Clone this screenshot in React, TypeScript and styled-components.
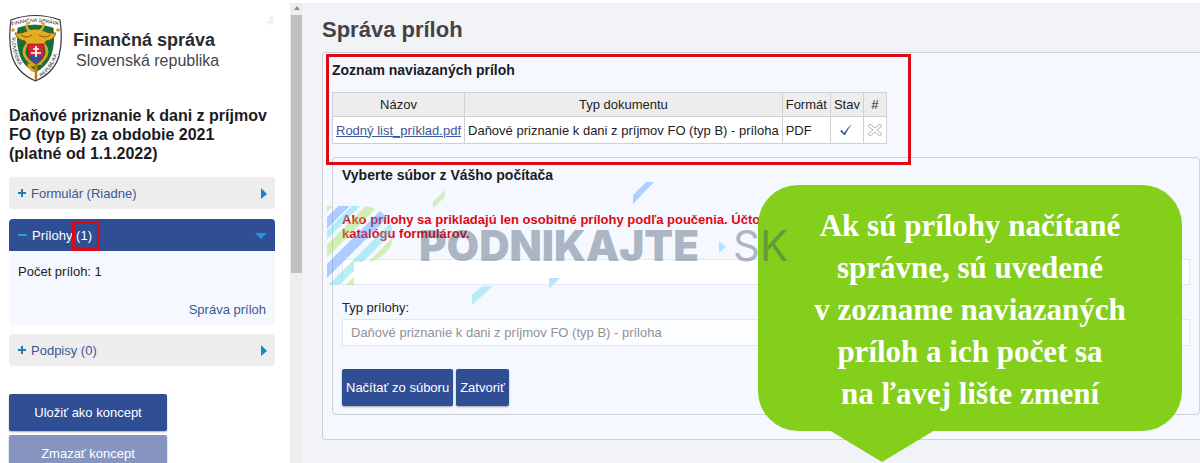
import React from "react";
import styled, { createGlobalStyle } from "styled-components";

const BLUE = "#2f4e94";
const LINK = "#3c5699";
const RED = "#dc0a14";
const LINE = "#cfd0d4";

const GlobalStyle = createGlobalStyle`
  * { box-sizing: border-box; }
  body { margin: 0; background: #fff; }
  body, button, input, select {
    font-family: "Liberation Sans", Arial, sans-serif;
    font-size: 13px;
    color: #222;
  }
  h1, h2, h3, p { margin: 0; }
`;

const Page = styled.div`
  display: flex;
  height: 100vh;
  overflow: hidden;
`;

const Sidebar = styled.aside`
  position: relative;
  flex: 0 0 290px;
  padding: 14px 15px 0 9px;
`;

const StepCount = styled.span`
  position: absolute;
  top: 14px;
  right: 16px;
  font-size: 12px;
  color: #e9e9f1;
`;

const Brand = styled.header`
  display: flex;
  gap: 11px;
  height: 68px;
`;

const BrandName = styled.div`
  padding-top: 16px;
  font-size: 18px;
  line-height: 21px;
  font-weight: bold;
  color: #2b2b2f;
`;

const BrandCountry = styled.div`
  padding-left: 3px;
  font-size: 16px;
  line-height: 20px;
  font-weight: normal;
  color: #46464a;
`;

const FormTitle = styled.h2`
  margin: 24px 0 14px;
  font-size: 16px;
  line-height: 19px;
  color: #1b1b1f;
`;

const StepButton = styled.button<{ $open?: boolean }>`
  display: flex;
  align-items: center;
  gap: 5px;
  width: 100%;
  height: 32px;
  margin-top: ${(p) => (p.$open ? "10px" : "0")};
  padding: 0 8px 0 9px;
  border: 0;
  border-radius: ${(p) => (p.$open ? "4px 4px 0 0" : "4px")};
  background: ${(p) => (p.$open ? BLUE : "#ededee")};
  color: ${(p) => (p.$open ? "#fff" : LINK)};
  text-align: left;

  svg:last-child { margin-left: auto; }
`;

const Count = styled.span`
  position: relative;

  &::after {
    content: "";
    position: absolute;
    inset: -7px -8px -8px -4px;
    border: 3px solid ${RED};
  }
`;

const StepPanel = styled.div`
  display: flex;
  flex-direction: column;
  justify-content: space-between;
  height: 74px;
  margin-bottom: 9px;
  padding: 13px 9px 8px;
  border-radius: 0 0 4px 4px;
  background: #f5f8ff;
`;

const PanelLink = styled.a`
  align-self: flex-end;
  color: ${LINK};
  text-decoration: none;
`;

const SideActions = styled.div`
  display: flex;
  flex-direction: column;
  gap: 4px;
  width: 158px;
  margin-top: 28px;
`;

const Action = styled.button<{ $muted?: boolean }>`
  height: 37px;
  padding: 0 4px;
  border: 0;
  border-radius: 2px;
  background: ${(p) => (p.$muted ? "#8595bf" : BLUE)};
  box-shadow: 0 1px 2px rgba(0, 0, 0, 0.35);
  color: #fff;
`;

const ScrollTrack = styled.div`
  flex: 0 0 13px;
  display: flex;
  flex-direction: column;
  align-items: center;
  margin-top: 3px;
  background: #eeeef0;
`;

const ScrollThumb = styled.div`
  width: 11px;
  height: 258px;
  background: #c0c0c1;
`;

const Main = styled.main`
  position: relative;
  flex: 1;
  min-width: 0;
  margin-top: 3px;
  padding: 14px 0 0 19px;
  background: #f2f3f7;
`;

const Title = styled.h1`
  margin-bottom: 9px;
  font-size: 22px;
  line-height: 26px;
  color: #434347;
`;

const Panel = styled.section`
  padding: 8px 0 24px 9px;
  border: 1px solid ${LINE};
  border-right: 0;
  border-radius: 4px 0 0 4px;
  background: #f5f8ff;
`;

const SectionTitle = styled.h2`
  font-size: 14px;
  line-height: 18px;
  color: #1b1b1f;
`;

const Attachments = styled.table`
  margin: 13px 0;
  border-collapse: collapse;
  background: #fff;

  th, td {
    height: 27px;
    padding: 0 3px;
    border: 1px solid ${LINE};
    text-align: left;
    white-space: nowrap;
  }
  th {
    height: 24px;
    background: #ededee;
    font-weight: normal;
    text-align: center;
  }
  a { color: ${LINK}; }
  svg { display: block; margin: 0 auto; }
`;

const Upload = styled.form`
  padding: 8px 9px;
  border: 1px solid ${LINE};
  border-radius: 4px;
`;

const Warning = styled.p`
  margin: 29px 0 18px;
  font-weight: bold;
  line-height: 14px;
  color: ${RED};
`;

const fieldStyle = `
  display: block;
  width: 100%;
  border: 1px solid #e3e7f2;
  border-radius: 0;
  appearance: none;
`;

const FileName = styled.input`
  ${fieldStyle}
  height: 26px;
  background: #fff;
`;

const Label = styled.label`
  display: block;
  margin: 15px 0 4px;
  line-height: 15px;
`;

const TypeSelect = styled.select`
  ${fieldStyle}
  height: 27px;
  padding: 0 8px;
  background: #fcfdff;
  opacity: 1;

  &:disabled { color: #929297; opacity: 1; }
`;

const Buttons = styled.div`
  display: flex;
  gap: 3px;
  margin-top: 23px;
`;

const Highlight = styled.div`
  position: absolute;
  top: 51px;
  left: 23px;
  width: 585px;
  height: 111px;
  border: 3px solid ${RED};
`;

const Bubble = styled.aside`
  position: absolute;
  top: 182px;
  right: 18px;
  width: 424px;
  padding: 20px 0 16px;
  border-radius: 40px;
  background: #83cf1b;
  color: #fff;
  font: bold 31px/42px "Liberation Serif", "Times New Roman", serif;
  text-align: center;

  &::after {
    content: "";
    position: absolute;
    top: 100%;
    left: 71px;
    margin-top: -1px;
    border: solid transparent;
    border-width: 32px 53px 0;
    border-top-color: #83cf1b;
  }
`;

const Watermark = styled.svg`
  position: absolute;
  top: 177px;
  left: 24px;
  pointer-events: none;
`;

const Crest = () => (
  <svg width="53" height="68" viewBox="0 0 53 68" role="img" aria-label="Finančná správa">
    <defs>
      <path id="crest-top" d="M3 12Q26 4 51 12" />
      <path id="crest-left" d="M3 23C3 41 8 53 22 63" />
      <path id="crest-right" d="M32 63C46 53 50 40 51 22" />
    </defs>
    <path d="M2 6Q26-3 51 6Q54 26 50 42Q45 59 26.500 67Q8 59 3 42Q-1 26 2 6Z" fill="#fff" stroke="#35353a" strokeWidth="1.200" />
    <path d="M9 14Q26 8 44 14Q46 29 42 41Q38 52 26.500 58Q14 52 11 41Q7 29 9 14Z" fill="#14713a" stroke="#173d24" strokeWidth=".6" />
    <g fontFamily="Liberation Sans, sans-serif" fontSize="5" fill="#222">
      <text><textPath href="#crest-top">FINANČNÁ SPRÁVA</textPath></text>
      <text><textPath href="#crest-left">SLOVENSKÁ</textPath></text>
      <text><textPath href="#crest-right">REPUBLIKA</textPath></text>
    </g>
    <path d="M4 14v4M2 16h4M49 14v4M47 16h4" stroke="#d79b13" strokeWidth="1.300" />
    <path d="M6 19Q13 20 18 17Q26 13 35 17Q40 20 47 19Q45 26 37 27L35 31H18L16 27Q8 26 6 19Z" fill="#e3ac22" stroke="#6d4a08" strokeWidth=".8" />
    <path d="M18 10Q16 17 25 18Q34 18 35 10M17 10l4-1M32 9l4 1" fill="none" stroke="#e3ac22" strokeWidth="2.200" />
    <path d="M12 21q6 4 11 0M30 21q6 4 11 0" fill="none" stroke="#835b0d" strokeWidth="1" />
    <path d="M18 30Q12 38 18 45Q24 52 33 49M35 30Q41 38 35 45Q29 52 20 51Q21 57 28 57" fill="none" stroke="#dca31d" strokeWidth="2.800" />
    <path d="M27 45V66" stroke="#b87d0e" strokeWidth="2.600" />
    <path d="M19 30H35V40Q34 47 27 50Q20 47 19 40Z" fill="#d8242c" stroke="#702020" strokeWidth=".6" />
    <path d="M20 43Q23 40 27 42Q31 40 34 43Q32 47 27 49Q22 47 20 43Z" fill="#2a549d" />
    <path d="M27 32V43M24 35h6M22 39h10" stroke="#fff" strokeWidth="1.700" />
  </svg>
);

const Plus = () => (
  <svg width="8" height="8" viewBox="0 0 8 8" aria-hidden="true">
    <path d="M4 0V8M0 4H8" stroke="#1780bd" strokeWidth="2" />
  </svg>
);

const Minus = () => (
  <svg width="9" height="8" viewBox="0 0 9 8" aria-hidden="true">
    <path d="M0 4H9" stroke="#2a9be0" strokeWidth="2" />
  </svg>
);

const ArrowRight = () => (
  <svg width="6" height="12" viewBox="0 0 6 12" aria-hidden="true">
    <path d="M0 1L6 7L0 12Z" fill="#1488c8" />
  </svg>
);

const ArrowDown = () => (
  <svg width="12" height="8" viewBox="0 0 12 8" aria-hidden="true">
    <path d="M0 2H12L6 8Z" fill="#2693d8" />
  </svg>
);

/* Diagonal stripes of the emblem: where each meets the left edge, its thickness and colour. */
const STRIPES: Array<[number, number, string]> = [
  [3, 4, "#a0e055"],
  [17, 8, "#4a90ff"],
  [29, 6, "#58dbea"],
  [45, 9, "#a0e055"],
  [65, 10, "#4a90ff"],
  [86, 8, "#58dbea"],
  [103, 8, "#a0e055"],
];

const PortalMark = () => (
  <Watermark width="480" height="130" viewBox="327 180 480 130" aria-hidden="true">
    <defs>
      <clipPath id="mark-shape">
        <path d="M327 206H366Q393 212 393 237Q391 255 370 262H354V285H327Z" />
      </clipPath>
    </defs>
    <g clipPath="url(#mark-shape)" opacity=".42">
      {STRIPES.map(([at, width, color]) => (
        <path
          key={at}
          d={`M317 ${216 + at}L${337 + at} 196`}
          stroke={color}
          strokeWidth={width}
        />
      ))}
    </g>
    <path d="M433 202L445 190V197L433 208Z" fill="#d2edba" />
    <path d="M633 195L646 182H654L633 204Z" fill="#aed0ff" />
    <path d="M472 295L482 286H493L472 305Z" fill="#b8edf5" />
    <path d="M549 278H560L549 289Z" fill="#b8e4fc" />
    <path d="M719 241L726 247L719 253Z" fill="#b5e2fc" />
    <g fill="#324664" fillOpacity=".38" fontFamily="Inter, sans-serif" fontSize="42">
      <text x="419" y="261" fontWeight="900">PODNIKAJTE</text>
      <text x="733" y="261" fontWeight="400">SK</text>
    </g>
  </Watermark>
);

export default function App() {
  return (
    <Page>
      <GlobalStyle />
      <Sidebar>
        <StepCount>4</StepCount>
        <Brand>
          <Crest />
          <BrandName>
            Finančná správa
            <BrandCountry>Slovenská republika</BrandCountry>
          </BrandName>
        </Brand>
        <FormTitle>
          Daňové priznanie k dani z príjmov
          <br />
          FO (typ B) za obdobie 2021
          <br />
          (platné od 1.1.2022)
        </FormTitle>
        <StepButton type="button">
          <Plus />
          Formulár (Riadne)
          <ArrowRight />
        </StepButton>
        <StepButton type="button" $open>
          <Minus />
          <span>
            Prílohy <Count>(1)</Count>
          </span>
          <ArrowDown />
        </StepButton>
        <StepPanel>
          <span>Počet príloh: 1</span>
          <PanelLink href="#prilohy">Správa príloh</PanelLink>
        </StepPanel>
        <StepButton type="button">
          <Plus />
          Podpisy (0)
          <ArrowRight />
        </StepButton>
        <SideActions>
          <Action type="button">Uložiť ako koncept</Action>
          <Action type="button" $muted>Zmazať koncept</Action>
        </SideActions>
      </Sidebar>

      <ScrollTrack aria-hidden="true">
        <svg width="12" height="12" viewBox="0 0 12 12">
          <path d="M3 7L6 3L9 7Z" fill="#909094" />
        </svg>
        <ScrollThumb />
      </ScrollTrack>

      <Main>
        <Title>Správa príloh</Title>
        <Panel id="prilohy">
          <SectionTitle>Zoznam naviazaných príloh</SectionTitle>
          <Attachments>
            <thead>
              <tr>
                <th>Názov</th>
                <th>Typ dokumentu</th>
                <th>Formát</th>
                <th>Stav</th>
                <th>#</th>
              </tr>
            </thead>
            <tbody>
              <tr>
                <td><a href="#priloha">Rodný list_príklad.pdf</a></td>
                <td>Daňové priznanie k dani z príjmov FO (typ B) - príloha</td>
                <td>PDF</td>
                <td>
                  <svg width="13" height="12" viewBox="0 0 13 12" role="img" aria-label="V poriadku">
                    <path d="M0 7L2 6L4 9Q7 4 12 0Q8 5 5 11H4Z" fill={LINK} />
                  </svg>
                </td>
                <td>
                  <svg width="16" height="14" viewBox="0 0 16 14" role="img" aria-label="Odstrániť">
                    <path d="M3 1L8 5L13 1L15 3L10 7L15 11L13 13L8 9L3 13L1 11L6 7L1 3Z" fill="#fff" stroke="#b5b5ba" />
                  </svg>
                </td>
              </tr>
            </tbody>
          </Attachments>
          <Upload>
            <SectionTitle>Vyberte súbor z Vášho počítača</SectionTitle>
            <Warning>
              Ako prílohy sa prikladajú len osobitné prílohy podľa poučenia. Účtovná závierka
              <br />
              katalógu formulárov.
            </Warning>
            <FileName type="text" aria-label="Súbor" />
            <Label htmlFor="typ">Typ prílohy:</Label>
            <TypeSelect id="typ" disabled>
              <option>Daňové priznanie k dani z príjmov FO (typ B) - príloha</option>
            </TypeSelect>
            <Buttons>
              <Action type="button">Načítať zo súboru</Action>
              <Action type="button">Zatvoriť</Action>
            </Buttons>
          </Upload>
        </Panel>
        <Highlight />
        <Bubble>
          Ak sú prílohy načítané
          <br />
          správne, sú uvedené
          <br />
          v zozname naviazaných
          <br />
          príloh a ich počet sa
          <br />
          na ľavej lište zmení
        </Bubble>
        <PortalMark />
      </Main>
    </Page>
  );
}
